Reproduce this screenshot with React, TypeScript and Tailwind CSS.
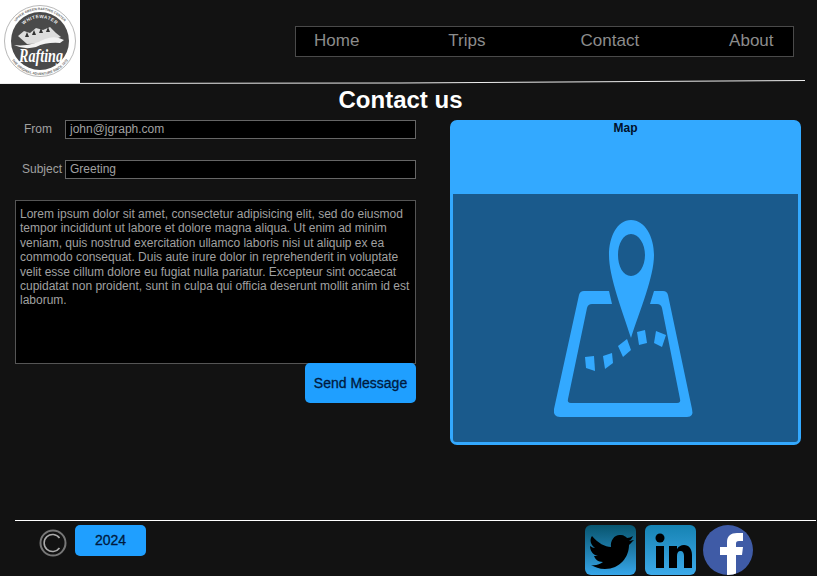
const loremText =
  'Lorem ipsum dolor sit amet, consectetur adipisicing elit, sed do eiusmod tempor incididunt ut labore et dolore magna aliqua. Ut enim ad minim veniam, quis nostrud exercitation ullamco laboris nisi ut aliquip ex ea commodo consequat. Duis aute irure dolor in reprehenderit in voluptate velit esse cillum dolore eu fugiat nulla pariatur. Excepteur sint occaecat cupidatat non proident, sunt in culpa qui officia deserunt mollit anim id est laborum.';

const Logo = () => (
  <svg viewBox="0 0 80 83" className="w-[80px] h-[83px] block">
    <defs>
      <path id="ringTop" d="M9 41 A31 31 0 0 1 71 41" />
      <path id="ringInner" d="M17 41 A23 23 0 0 1 63 41" />
      <path id="ringBottom" d="M6 41 A34 34 0 0 0 74 41" />
    </defs>
    <rect width="80" height="83" fill="#fff" />
    <circle cx="40" cy="41" r="35.5" fill="none" stroke="#888" strokeWidth="0.6" />
    <circle cx="40" cy="41" r="29" fill="#4a4a4a" />
    <text fontSize="3.4" fill="#666" fontWeight="700" fontFamily="'Liberation Sans', sans-serif" textAnchor="middle">
      <textPath href="#ringTop" startOffset="50%">UPPER GREEN RAFTING CENTER</textPath>
    </text>
    <text fontSize="4.6" fill="#eee" fontWeight="700" letterSpacing="0.5" fontFamily="'Liberation Sans', sans-serif" textAnchor="middle">
      <textPath href="#ringInner" startOffset="50%">WHITEWATER</textPath>
    </text>
    <text fontSize="3.4" fill="#666" fontWeight="700" fontFamily="'Liberation Sans', sans-serif" textAnchor="middle">
      <textPath href="#ringBottom" startOffset="50%">THE ORIGINAL ADVENTURE SINCE 1972</textPath>
    </text>
    <path d="M18 36 L24 31 L30 33 L36 28 L43 30 L50 27 L56 33 L61 37 L52 40 Q40 44 27 44 Z" fill="#ddd" />
    <path d="M25 37 l2 -5 l2 5 Z M32 35 l2 -5 l2 5 Z M39 33 l2 -5 l2 5 Z M46 32 l2 -5 l2 5 Z" fill="#333" />
    <path d="M14 45 Q30 47 45 39 Q55 35 64 40 L60 43 Q46 42 36 47 Q24 50 14 45 Z" fill="#f2f2f2" />
    <text x="41" y="62" fontSize="18" fill="#fff" fontWeight="700" fontStyle="italic" textAnchor="middle" fontFamily="'Liberation Serif', serif" textLength="44" lengthAdjust="spacingAndGlyphs">
      Rafting
    </text>
  </svg>
);

const MapIcon = () => (
  <svg viewBox="453 194 345 248" className="w-full h-full block" fill="#33a9ff">
    <path d="M609 291 H584 Q580 291 579 295 L554 409 Q553 417 560 417 H687 Q694 417 692 409 L668 295 Q667 291 663 291 H654 L650 304 H657 Q661 304 662 308 L680 399 Q681 403 677 403 H571 Q567 403 568 399 L587 308 Q588 304 592 304 H612 Z" />
    <path
      fillRule="evenodd"
      d="M631 220 C645 220 654 237 654 255 C654 277 640 310 631 338 C622 310 609 277 609 255 C609 237 617 220 631 220 Z M631 234 C623 234 618 244 618 255 C618 266 623 276 631 276 C639 276 645 266 645 255 C645 244 639 234 631 234 Z"
    />
    <path d="M585 357 L594 356 L595 371 L586 368 Z" />
    <path d="M603 356 L612 353 L613 363 L605 369 Z" />
    <path d="M618 346 L627 339 L631 350 L623 357 Z" />
    <path d="M637 332 L645 330 L647 343 L639 345 Z" />
    <path d="M656 331 L666 335 L662 347 L654 343 Z" />
  </svg>
);

const CopyrightIcon = () => (
  <svg viewBox="0 0 28 28" className="w-[28px] h-[28px]" fill="none">
    <circle cx="14" cy="14" r="12.5" stroke="#777" strokeWidth="2" />
    <path d="M20.5 9 A8.5 8.5 0 1 0 20.5 19" stroke="#aaa" strokeWidth="1.6" />
  </svg>
);

const App = () => {
  return (
    <div className="w-[817px] h-[576px] overflow-hidden bg-[#121212] font-['Liberation_Sans',Arial,sans-serif]">
      {/* Header */}
      <div className="flex h-[80px]">
        <div className="w-[80px] h-[83px]">
          <Logo />
        </div>
        <nav className="ml-[215px] mt-[26px] flex w-[499px] h-[31px] items-center border border-[#4a4a4a] bg-black pb-[2px] pl-[18px] text-[17px] text-[#8c8c8c]">
          <span>Home</span>
          <span className="ml-[89px]">Trips</span>
          <span className="ml-[95px]">Contact</span>
          <span className="ml-[90px]">About</span>
        </nav>
      </div>

      {/* Divider */}
      <svg viewBox="0 0 817 4" className="block w-[817px] h-[4px]">
        <path d="M0 3.5 L400 3 L805 0.5" stroke="#eee" strokeWidth="1" fill="none" />
      </svg>

      <h1 className="mt-[2px] pr-[16px] text-center text-[24px] leading-[28px] font-bold text-white">
        Contact us
      </h1>

      {/* Main */}
      <div className="flex h-[406px] items-start pt-[6px] pl-[15px]">
        <div className="w-[401px] text-[12px] text-[#a0a0a0]">
          <div className="flex h-[19px] items-center">
            <label className="w-[50px] pb-[2px] pl-[9px]">From</label>
            <div className="flex h-[19px] flex-1 items-center border border-[#666] bg-black px-1 pb-[2px]">john@jgraph.com</div>
          </div>
          <div className="mt-[21px] flex h-[19px] items-center">
            <label className="w-[50px] pb-[2px] pl-[7px]">Subject</label>
            <div className="flex h-[19px] flex-1 items-center border border-[#666] bg-black px-1 pb-[2px]">Greeting</div>
          </div>
          <div className="mt-[21px] h-[164px] border border-[#555] bg-black px-1 pt-[6px] text-[12px] leading-[14.4px]">
            {loremText}
          </div>
          <div className="-mt-px flex justify-end">
            <button className="h-[40px] w-[111px] rounded-[5px] bg-[#1f9fff] text-[14px] text-[#001a40] [-webkit-text-stroke:0.3px_#001a40]">
              Send Message
            </button>
          </div>
        </div>

        <div className="ml-[34px] flex h-[325px] w-[351px] flex-col rounded-[7px] border-[3px] border-[#33a9ff] bg-[#33a9ff]">
          <div className="h-[71px] text-center text-[12px] leading-[10px] font-bold text-[#00102a]">Map</div>
          <div className="min-h-0 flex-1 rounded-b-[3px] bg-[#1a5a8c]">
            <MapIcon />
          </div>
        </div>
      </div>

      {/* Footer */}
      <div className="ml-[15px] h-px w-[801px] bg-white" />
      <div className="flex h-[55px] items-start pt-[4px]">
        <div className="ml-[39px] mt-[4px]">
          <CopyrightIcon />
        </div>
        <div className="ml-[8px] flex h-[31px] w-[71px] items-center justify-center rounded-[5px] bg-[#1f9fff] text-[14px] text-[#001a40] [-webkit-text-stroke:0.3px_#001a40]">
          2024
        </div>
        <svg viewBox="0 0 51 50" className="ml-[439px] h-[50px] w-[51px] rounded-[6px] bg-gradient-to-b from-[#07556f] to-[#36a6ea]">
          <path d="M7 11 C13 18 20 22 26 22 C25 15 30 9 36 10 C39 10 41 12 42 13 C44 13 46 12 48 11 C47 13 46 15 44 16 C46 16 47 15 49 15 C47 17 46 18 44 20 C44 32 35 44 20 44 C14 44 10 42 6 40 C11 41 15 39 18 37 C13 37 10 34 9 31 C11 31 12 31 13 31 C8 30 5 26 5 21 C7 22 8 23 10 23 C6 20 4 15 7 11 Z" fill="#000" />
        </svg>
        <svg viewBox="0 0 51 50" className="ml-[9px] h-[50px] w-[51px] rounded-[6px] bg-gradient-to-b from-[#1583b3] to-[#3caaea]">
          <circle cx="15" cy="13" r="4.5" fill="#000" />
          <path d="M11 21 H19 V43 H11 Z M24 21 H32 V24 C34 21 36 20 39 20 C44 20 47 24 47 30 V43 H39 V31 C39 28 38 26 35.5 26 C33 26 32 28 32 31 V43 H24 Z" fill="#000" />
        </svg>
        <svg viewBox="0 0 50 50" className="ml-[7px] h-[50px] w-[50px] rounded-full bg-[#3f5ba6]">
          <path d="M24 50 V30 H17 V22 H24 V17 C24 11 28 8 34 8 H40 V16 H36 C33.5 16 33 17 33 19 V22 H40 L39 30 H33 V50 Z" fill="#fff" />
        </svg>
      </div>
    </div>
  );
};

export default App;
